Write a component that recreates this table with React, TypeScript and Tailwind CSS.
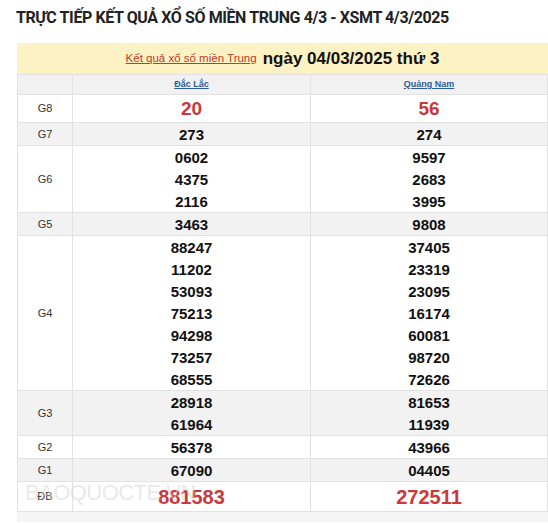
const rows = [
  { label: "G8", a: ["20"], b: ["56"], kind: "g8" },
  { label: "G7", a: ["273"], b: ["274"] },
  { label: "G6", a: ["0602", "4375", "2116"], b: ["9597", "2683", "3995"] },
  { label: "G5", a: ["3463"], b: ["9808"] },
  {
    label: "G4",
    a: ["88247", "11202", "53093", "75213", "94298", "73257", "68555"],
    b: ["37405", "23319", "23095", "16174", "60081", "98720", "72626"],
  },
  { label: "G3", a: ["28918", "61964"], b: ["81653", "11939"] },
  { label: "G2", a: ["56378"], b: ["43966"] },
  { label: "G1", a: ["67090"], b: ["04405"] },
  { label: "ĐB", a: ["881583"], b: ["272511"], kind: "db" },
]

function Cell({ nums, kind }: { nums: string[]; kind?: string }) {
  const size =
    kind === "g8"
      ? "text-[19px] h-[27px] text-[#c9383a]"
      : kind === "db"
        ? "text-[20px] h-[29px] text-[#c9383a]"
        : "text-[15px] h-[22px] text-[#111]"
  return (
    <div className="flex flex-col items-center justify-center border-l border-[#e2e2e2]">
      {nums.map((n, i) => (
        <span key={i} className={`flex items-center font-bold leading-none ${size}`}>
          {n}
        </span>
      ))}
    </div>
  )
}

export default function App() {
  return (
    <div className="h-[523px] w-[548px] overflow-hidden bg-white font-['Liberation_Sans',Arial,sans-serif]">
      <h1 className="pl-4 pt-[8px] font-['Roboto',sans-serif] text-[16px] font-bold leading-5 tracking-[-0.4px] text-[#222]">
        TRỰC TIẾP KẾT QUẢ XỔ SỐ MIỀN TRUNG 4/3 - XSMT 4/3/2025
      </h1>

      <div className="relative ml-[17px] mt-[15px] w-[531px] bg-[#f5f5f5] pb-[10px]">
        <div className="flex h-[31px] items-center justify-center gap-[6px] bg-[#fcf2c4]">
          <a className="text-[11.5px] text-[#c0392b] underline">Kết quả xổ số miền Trung</a>
          <span className="text-[17px] font-bold text-[#111]">ngày 04/03/2025 thứ 3</span>
        </div>

        <div className="border-x border-[#e2e2e2] bg-white">
          <div className="grid h-[21px] grid-cols-[54px_238px_1fr] border-y border-[#e2e2e2] bg-[#f1f1f1] text-[9px]">
            <div />
            <div className="flex items-center justify-center border-l border-[#e2e2e2]">
              <a className="font-bold text-[#2d5b9a] underline">Đắc Lắc</a>
            </div>
            <div className="flex items-center justify-center border-l border-[#e2e2e2]">
              <a className="font-bold text-[#2d5b9a] underline">Quảng Nam</a>
            </div>
          </div>

          {rows.map((r, i) => (
            <div
              key={r.label}
              className={`grid grid-cols-[54px_238px_1fr] border-b border-[#e2e2e2] ${
                i % 2 === 1 ? "bg-[#f2f2f2]" : "bg-white"
              }`}
            >
              <div className="flex items-center justify-center text-[11px] text-[#333]">{r.label}</div>
              <Cell nums={r.a} kind={r.kind} />
              <Cell nums={r.b} kind={r.kind} />
            </div>
          ))}
        </div>

        {/* watermark */}
        <span className="pointer-events-none absolute bottom-[13px] left-[8px] text-[22px] tracking-tight text-[#d4d4d4]/50">
          BAOQUOCTE.VN
        </span>
      </div>
    </div>
  )
}
